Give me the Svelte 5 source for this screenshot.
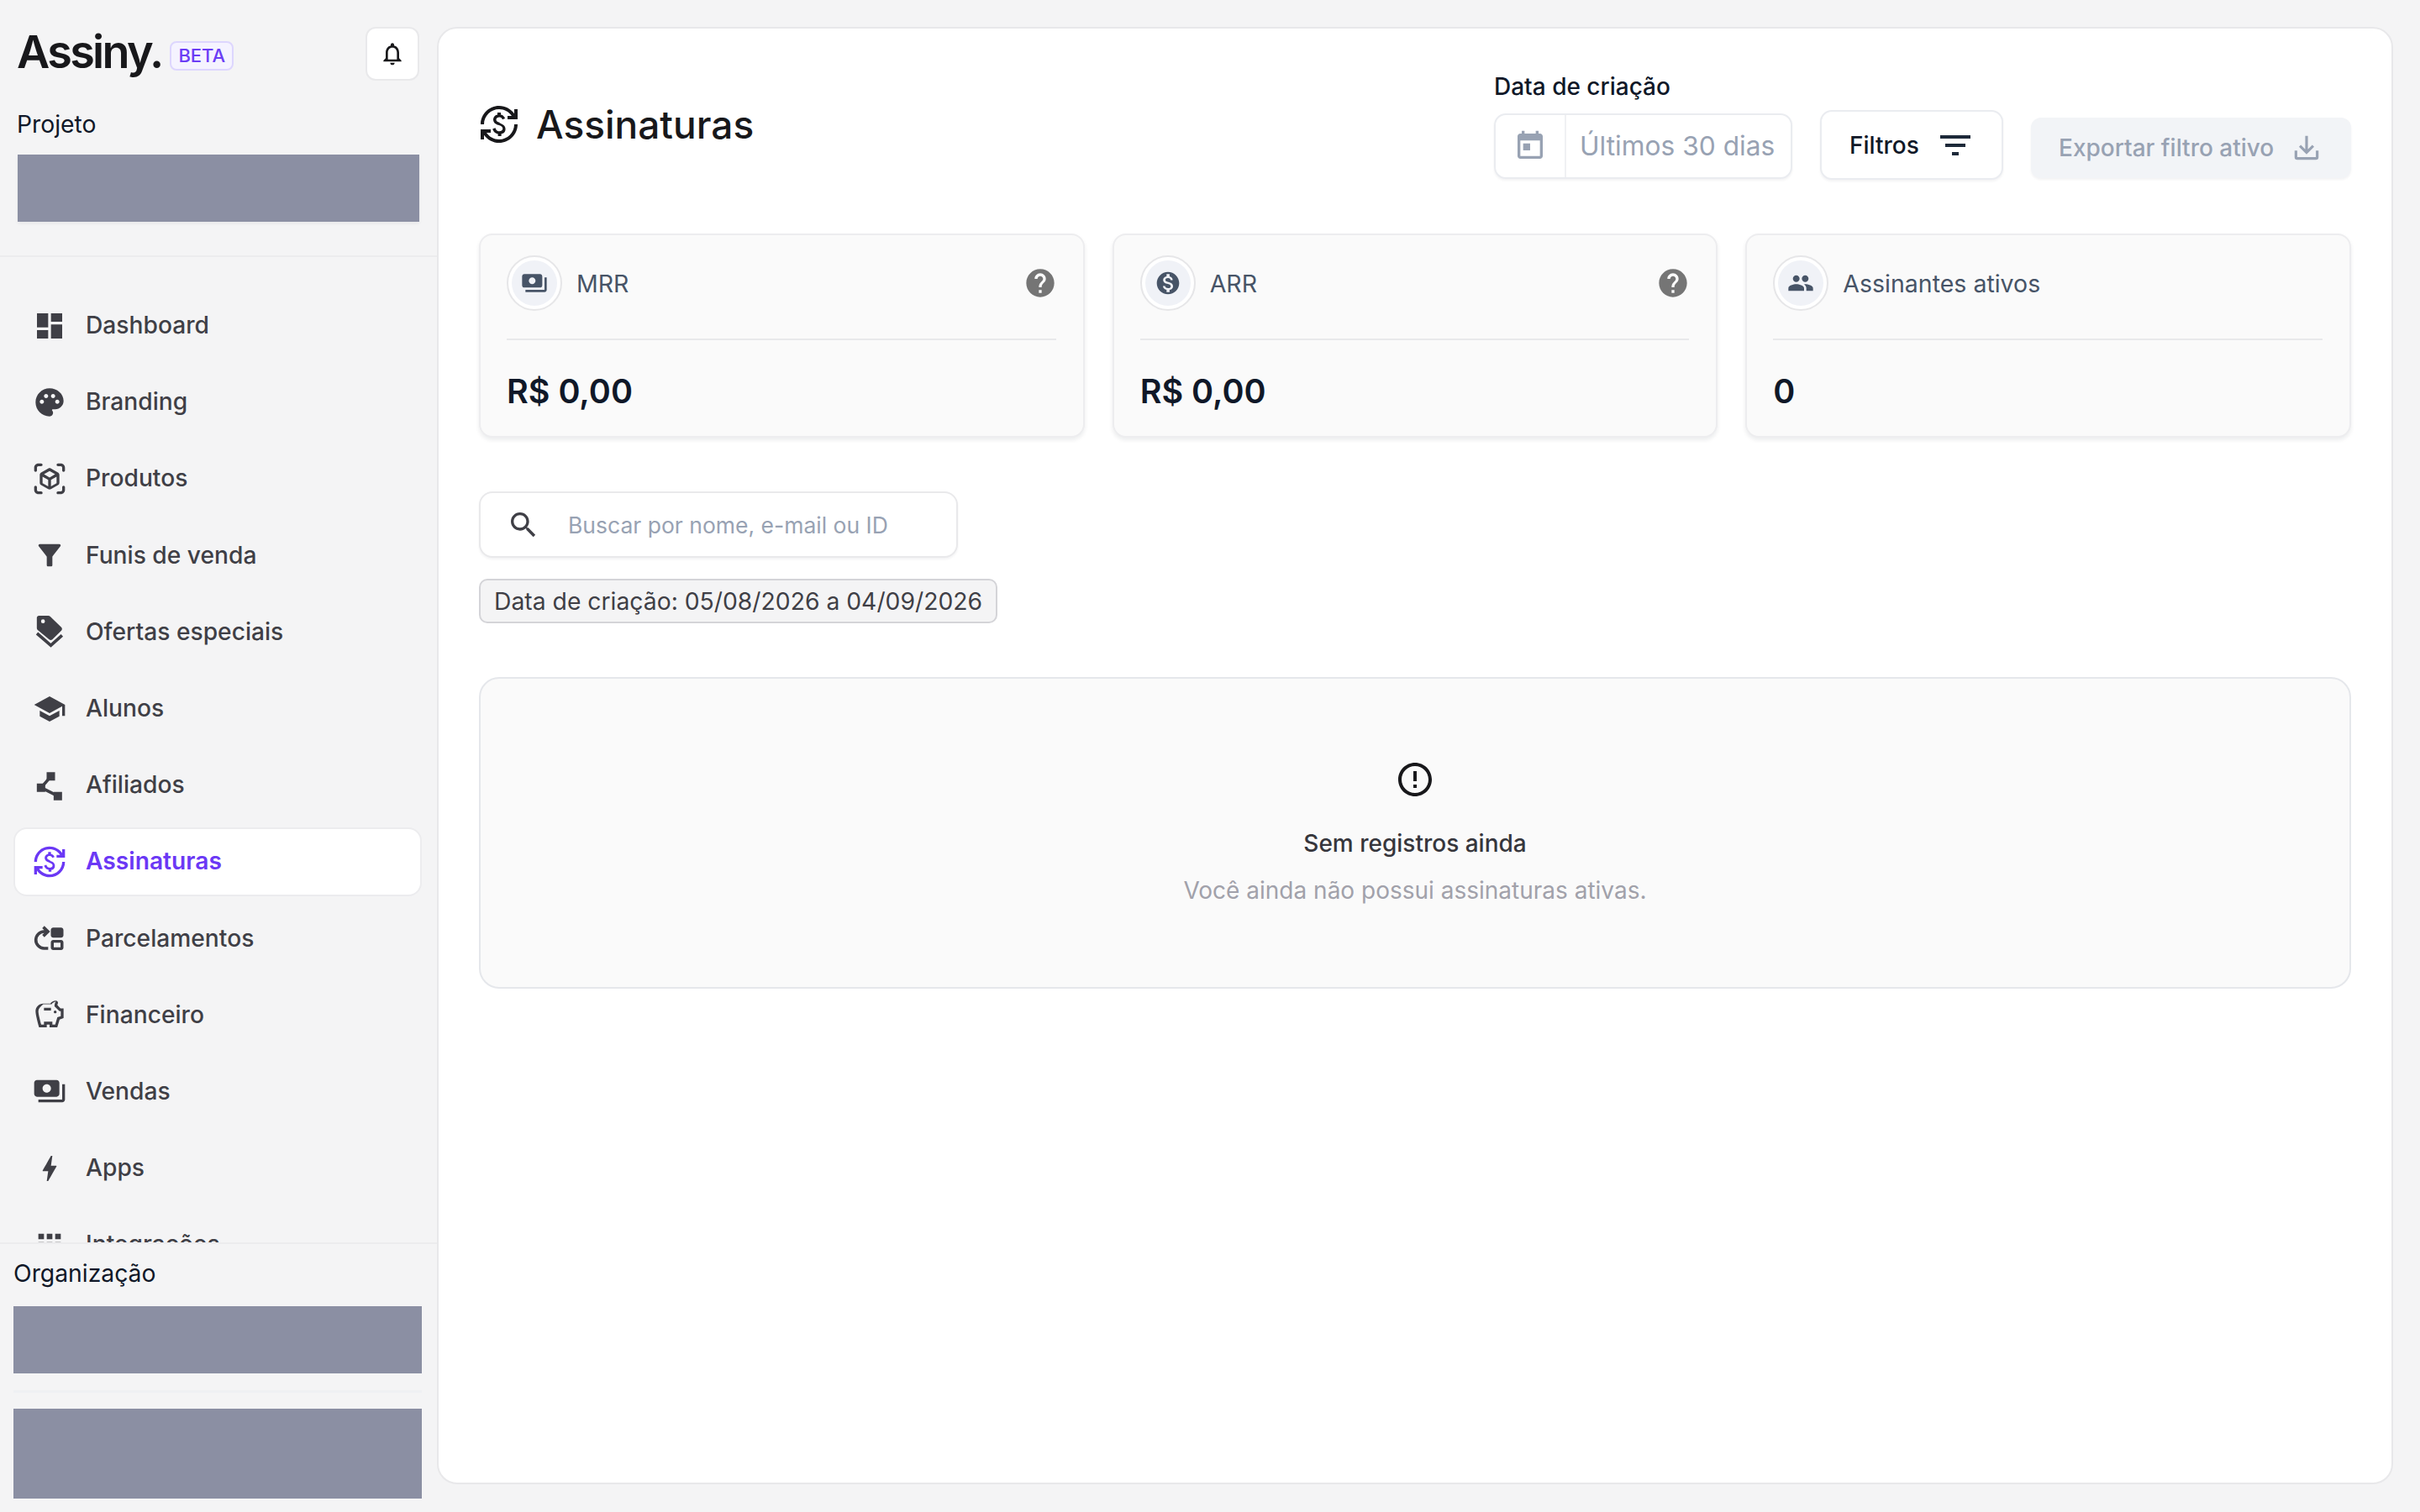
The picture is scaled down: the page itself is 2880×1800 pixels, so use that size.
<script>
  const nav = [
    { label: 'Dashboard', d: 'M3 13h8V3H3v10zm0 8h8v-6H3v6zm10 0h8V11h-8v10zm0-18v6h8V3h-8z' },
    { label: 'Branding', d: 'M12 2C6.49 2 2 6.49 2 12s4.49 10 10 10c1.38 0 2.5-1.12 2.5-2.5 0-.61-.23-1.2-.64-1.67-.08-.1-.13-.21-.13-.33 0-.28.22-.5.5-.5H16c3.31 0 6-2.69 6-6 0-4.96-4.49-9-10-9zm5.5 11c-.83 0-1.5-.67-1.5-1.5s.67-1.5 1.5-1.5 1.5.67 1.5 1.5-.67 1.5-1.5 1.5zm-3-4c-.83 0-1.5-.67-1.5-1.5S13.67 6 14.5 6s1.5.67 1.5 1.5S15.33 9 14.5 9zM5 11.5c0-.83.67-1.5 1.5-1.5S8 10.67 8 11.5 7.33 13 6.5 13 5 12.33 5 11.5zm6-4c0 .83-.67 1.5-1.5 1.5S8 8.33 8 7.5 8.67 6 9.5 6s1.5.67 1.5 1.5z' },
    { label: 'Produtos', d: 'M3 4c0-.55.45-1 1-1h2c.55 0 1-.45 1-1s-.45-1-1-1H4C2.34 1 1 2.34 1 4v2c0 .55.45 1 1 1s1-.45 1-1V4zm3 17H4c-.55 0-1-.45-1-1v-2c0-.55-.45-1-1-1s-1 .45-1 1v2c0 1.66 1.34 3 3 3h2c.55 0 1-.45 1-1s-.45-1-1-1zM20 1h-2c-.55 0-1 .45-1 1s.45 1 1 1h2c.55 0 1 .45 1 1v2c0 .55.45 1 1 1s1-.45 1-1V4c0-1.66-1.34-3-3-3zm2 16c-.55 0-1 .45-1 1v2c0 .55-.45 1-1 1h-2c-.55 0-1 .45-1 1s.45 1 1 1h2c1.66 0 3-1.34 3-3v-2c0-.55-.45-1-1-1zm-3-2.21V9.21c0-.72-.38-1.38-1-1.74l-5-2.88c-.31-.18-.65-.27-1-.27s-.69.09-1 .27L6 7.46c-.62.36-1 1.02-1 1.74v5.59c0 .72.38 1.38 1 1.74l5 2.88c.31.18.65.27 1 .27s.69-.09 1-.27l5-2.88c.62-.36 1-1.02 1-1.74zm-8 2.6-4-2.3v-4.63l4 2.33v4.6zm1-6.33L8.04 8.77 12 6.49l3.96 2.28L12 11.06zm5 4.03-4 2.3v-4.6l4-2.33v4.63z' },
    { label: 'Funis de venda', d: 'M4.25 5.61C6.27 8.2 10 13 10 13v6c0 .55.45 1 1 1h2c.55 0 1-.45 1-1v-6s3.72-4.8 5.74-7.39c.51-.66.04-1.61-.79-1.61H5.04c-.83 0-1.3.95-.79 1.61z' },
    { label: 'Ofertas especiais', d: 'M4.4.6h6.7c.5 0 1 .2 1.4.6l7.9 7.7c.7.7.7 1.7 0 2.4l-6.4 6.2c-.7.6-1.6.6-2.3 0L3.5 10.8c-.4-.4-.6-.8-.6-1.3V2.1c0-.8.7-1.5 1.5-1.5zm2.9 2.6a1.4 1.4 0 1 0 0 2.8 1.4 1.4 0 0 0 0-2.8z', line: 'M3 13.2l9.9 8.6 8-7.2' },
    { label: 'Alunos', d: 'M5 13.18v4L12 21l7-3.82v-4L12 17l-7-3.82zM12 3 1 9l11 6 9-4.91V17h2V9L12 3z' },
    { label: 'Afiliados', d: 'M9.9 2.6h6v6h-6zM2.9 10.6h6v6h-6zM14.9 16.6h6v6h-6z', line: 'M6 13.6l6.9-8M6 13.6l11.9 6' },
    { label: 'Assinaturas', active: true, d: 'M12.89 11.1c-1.78-.59-2.64-.96-2.64-1.9 0-1.02 1.11-1.39 1.81-1.39 1.31 0 1.79.99 1.9 1.34l1.58-.67c-.15-.45-.82-1.92-2.54-2.24V5h-2v1.26c-2.48.56-2.49 2.86-2.49 2.96 0 2.27 2.25 2.91 3.35 3.31 1.58.56 2.28 1.07 2.28 2.03 0 1.13-1.05 1.61-1.98 1.61-1.82 0-2.34-1.87-2.4-2.09l-1.66.67c.63 2.19 2.28 2.78 3.2 2.96V19h2v-1.24c.65-.11 2.48-.42 2.48-2.96.01-1.34-.59-2.65-3.89-3.7zM3 21H1v-6h6v2H4.52c1.61 2.41 4.36 4 7.48 4 4.97 0 9-4.03 9-9h2c0 6.08-4.92 11-11 11-3.72 0-7.01-1.85-9-4.67V21zm-2-9C1 5.92 5.92 1 12 1c3.72 0 7.01 1.85 9 4.67V3h2v6h-6V7h2.48C17.87 4.59 15.12 3 12 3c-4.97 0-9 4.03-9 9H1z' },
    { label: 'Parcelamentos', d: 'M14.6 4.4h5.6c.9 0 1.7.8 1.7 1.7v3.8c0 .9-.8 1.7-1.7 1.7h-5.6c-.9 0-1.7-.8-1.7-1.7V6.1c0-.9.8-1.7 1.7-1.7zm0 8.8h5.6c.9 0 1.7.8 1.7 1.7v3.8c0 .9-.8 1.7-1.7 1.7h-5.6c-.9 0-1.7-.8-1.7-1.7v-3.8c0-.9.8-1.7 1.7-1.7zm.4 2v3.2h4.8v-3.2z', line: 'M11 19.2H8A6 6 0 0 1 2.2 13 6 6 0 0 1 8 7.2h2M7.5 4l3.3 3.2-3.3 3.2' },
    { label: 'Financeiro', d: 'M15 10c0-.55.45-1 1-1s1 .45 1 1-.45 1-1 1-1-.45-1-1zM8 9h5V7H8v2zm14-1.5v6.97l-2.82.94L17.5 21H12v-2h-2v2H4.5S2 12.54 2 9.5 4.46 4 7.5 4h5c.91-1.21 2.36-2 4-2 .83 0 1.5.67 1.5 1.5 0 .21-.04.4-.12.58-.14.32-.26.69-.32 1.09l2.27 2.27H22zm-2 2h-.93l-3.57-3.57c.03-.97.16-2.37 1.03-3.36-1.32.19-2.45.98-3.03 1.93H7.5C5.57 6 4 7.57 4 9.5c0 1.88 1.22 6.65 2.01 9.5H8v-2h6v2h2.01l1.55-5.15 2.44-.82V9.5z' },
    { label: 'Vendas', d: 'M19 14V6c0-1.1-.9-2-2-2H3c-1.1 0-2 .9-2 2v8c0 1.1.9 2 2 2h14c1.1 0 2-.9 2-2zm-9-1c-1.66 0-3-1.34-3-3s1.34-3 3-3 3 1.34 3 3-1.34 3-3 3zm13-6v11c0 1.1-.9 2-2 2H4v-2h17V7h2z' },
    { label: 'Apps', d: 'M11 21h-1l1-7H7.5c-.58 0-.57-.32-.38-.66.19-.34.05-.08.07-.12C8.48 10.94 10.42 7.54 13 3h1l-1 7h3.5c.49 0 .56.33.47.51l-.07.15C12.96 17.55 11 21 11 21z' },
    { label: 'Integrações', d: 'M4 8h4V4H4v4zm6 12h4v-4h-4v4zm-6 0h4v-4H4v4zm0-6h4v-4H4v4zm6 0h4v-4h-4v4zm6-10v4h4V4h-4zm-6 4h4V4h-4v4zm6 6h4v-4h-4v4zm0 6h4v-4h-4v4z' }
  ];

  const subscriptionIcon = nav[7].d;
  const paymentsIcon = nav[10].d;

  const cards = [
    { label: 'MRR', value: 'R$ 0,00', help: true, d: paymentsIcon },
    { label: 'ARR', value: 'R$ 0,00', help: true, d: 'M12 2C6.48 2 2 6.48 2 12s4.48 10 10 10 10-4.48 10-10S17.52 2 12 2zm1.41 16.09V20h-2.67v-1.93c-1.71-.36-3.16-1.46-3.27-3.4h1.96c.1 1.05.82 1.87 2.65 1.87 1.96 0 2.4-.98 2.4-1.59 0-.83-.44-1.61-2.67-2.14-2.48-.6-4.18-1.62-4.18-3.67 0-1.72 1.39-2.84 3.11-3.21V4h2.67v1.95c1.86.45 2.79 1.86 2.85 3.39H14.3c-.05-1.11-.64-1.87-2.22-1.87-1.5 0-2.4.68-2.4 1.64 0 .84.65 1.39 2.67 1.91s4.18 1.39 4.18 3.91c-.01 1.83-1.38 2.83-3.12 3.16z' },
    { label: 'Assinantes ativos', value: '0', help: false, d: 'M16 11c1.66 0 2.99-1.34 2.99-3S17.66 5 16 5c-1.66 0-3 1.34-3 3s1.34 3 3 3zm-8 0c1.66 0 2.99-1.34 2.99-3S9.66 5 8 5C6.34 5 5 6.34 5 8s1.34 3 3 3zm0 2c-2.33 0-7 1.17-7 3.5V19h14v-2.5c0-2.33-4.67-3.5-7-3.5zm8 0c-.29 0-.62.02-.97.05 1.16.84 1.97 1.97 1.97 3.45V19h6v-2.5c0-2.33-4.67-3.5-7-3.5z' }
  ];
</script>

<div class="layout">
  <aside class="sidebar">
    <div class="sidebar-top">
      <div class="brand-row">
        <div class="brand">
          <span class="logo">Assiny.</span>
          <span class="beta">BETA</span>
        </div>
        <button class="bell" aria-label="Notificações">
          <svg viewBox="0 0 24 24" width="32" height="32"><path fill="#18181b" d="M12 22c1.1 0 2-.9 2-2h-4c0 1.1.9 2 2 2zm6-6v-5c0-3.07-1.63-5.64-4.5-6.32V4c0-.83-.67-1.5-1.5-1.5s-1.5.67-1.5 1.5v.68C7.64 5.36 6 7.92 6 11v5l-2 2v1h16v-1l-2-2zm-2 1H8v-6c0-2.48 1.51-4.5 4-4.5s4 2.02 4 4.5v6z" /></svg>
        </button>
      </div>
      <div class="side-label">Projeto</div>
      <div class="redacted project"></div>
    </div>

    <nav class="nav">
      {#each nav as item}
        <a class="nav-item" class:active={item.active} href="#top">
          <svg viewBox="0 0 24 24" width="40" height="40">
            <path fill="currentColor" fill-rule="evenodd" d={item.d} />
            {#if item.line}
              <path d={item.line} fill="none" stroke="currentColor" stroke-width="2.2" />
            {/if}
          </svg>
          <span>{item.label}</span>
        </a>
      {/each}
    </nav>

    <div class="sidebar-bottom">
      <div class="side-label">Organização</div>
      <div class="redacted org"></div>
      <div class="side-rule"></div>
      <div class="redacted user"></div>
    </div>
  </aside>

  <main class="panel">
    <header class="header">
      <h1 class="title">
        <svg viewBox="0 0 24 24" width="48" height="48"><path fill="#18181b" d={subscriptionIcon} /></svg>
        Assinaturas
      </h1>
      <div class="controls">
        <div class="date-group">
          <span class="date-label">Data de criação</span>
          <div class="date-input">
            <span class="date-icon">
              <svg viewBox="0 0 24 24" width="40" height="40"><path fill="#98a2b3" d="M19 3h-1V1h-2v2H8V1H6v2H5c-1.11 0-1.99.9-1.99 2L3 19c0 1.1.89 2 2 2h14c1.1 0 2-.9 2-2V5c0-1.1-.9-2-2-2zm0 16H5V8h14v11zM7 10h5v5H7z" /></svg>
            </span>
            <span class="date-value">Últimos 30 dias</span>
          </div>
        </div>
        <button class="filters">
          Filtros
          <svg viewBox="0 0 24 24" width="48" height="48"><path fill="#1d2939" d="M10 18h4v-2h-4v2zM3 6v2h18V6H3zm3 7h12v-2H6v2z" /></svg>
        </button>
        <button class="export" disabled>
          Exportar filtro ativo
          <svg viewBox="0 0 24 24" width="38" height="38" fill="none" stroke="#98a2b3" stroke-width="2"><path d="M4 14v5a1 1 0 0 0 1 1h14a1 1 0 0 0 1-1v-5M12 3v12.5M7 10.5l5 5 5-5" /></svg>
        </button>
      </div>
    </header>

    <section class="cards">
      {#each cards as card}
        <div class="card">
          <div class="card-head">
            <span class="ring">
              <span class="ring-inner">
                <svg viewBox="0 0 24 24" width="32" height="32"><path fill="#475467" d={card.d} /></svg>
              </span>
            </span>
            <span class="card-label">{card.label}</span>
            {#if card.help}
              <svg class="help" viewBox="0 0 24 24" width="40" height="40"><path fill="#757575" d="M12 2C6.48 2 2 6.48 2 12s4.48 10 10 10 10-4.48 10-10S17.52 2 12 2zm1 17h-2v-2h2v2zm2.07-7.75-.9.92C13.45 12.9 13 13.5 13 15h-2v-.5c0-1.1.45-2.1 1.17-2.83l1.24-1.26c.37-.36.59-.86.59-1.41 0-1.1-.9-2-2-2s-2 .9-2 2H8c0-2.21 1.79-4 4-4s4 1.79 4 4c0 .88-.36 1.68-.93 2.25z" /></svg>
            {/if}
          </div>
          <div class="card-value">{card.value}</div>
        </div>
      {/each}
    </section>

    <div class="search">
      <svg viewBox="0 0 24 24" width="40" height="40"><path fill="#3f3f46" d="M15.5 14h-.79l-.28-.27C15.41 12.59 16 11.11 16 9.5 16 5.91 13.09 3 9.5 3S3 5.91 3 9.5 5.91 16 9.5 16c1.61 0 3.09-.59 4.23-1.57l.27.28v.79l5 4.99L20.49 19l-4.99-5zm-6 0C7.01 14 5 11.99 5 9.5S7.01 5 9.5 5 14 7.01 14 9.5 11.99 14 9.5 14z" /></svg>
      <span>Buscar por nome, e-mail ou ID</span>
    </div>

    <div class="chip">Data de criação: 05/08/2026 a 04/09/2026</div>

    <section class="empty">
      <svg viewBox="0 0 24 24" width="48" height="48"><path fill="#18181b" d="M11 15h2v2h-2zm0-8h2v6h-2zm.99-5C6.47 2 2 6.48 2 12s4.47 10 9.99 10C17.52 22 22 17.52 22 12S17.52 2 11.99 2zM12 20c-4.42 0-8-3.58-8-8s3.58-8 8-8 8 3.58 8 8-3.58 8-8 8z" /></svg>
      <h2>Sem registros ainda</h2>
      <p>Você ainda não possui assinaturas ativas.</p>
    </section>
  </main>
</div>

<style>
  :global(body) {
    margin: 0;
    background: #f4f4f5;
    font-family: Inter, "Liberation Sans", sans-serif;
  }

  .layout {
    display: flex;
    height: 1800px;
    overflow: hidden;
  }

  .sidebar {
    width: 520px;
    flex: none;
    display: flex;
    flex-direction: column;
    height: 100%;
  }

  .sidebar-top {
    padding: 32px 21px 40px;
    border-bottom: 2px solid #ececee;
  }

  .brand-row {
    display: flex;
    align-items: center;
    justify-content: space-between;
    height: 64px;
  }

  .brand {
    display: flex;
    align-items: center;
    gap: 10px;
    margin-left: -1px;
  }

  .logo {
    font-size: 54px;
    font-weight: 600;
    letter-spacing: -0.05em;
    color: #18181b;
    line-height: 64px;
    margin-top: -4px;
  }

  .beta {
    font-size: 22px;
    font-weight: 500;
    line-height: 31px;
    padding: 0 8px;
    color: #6b3df5;
    background: #f5f3ff;
    border: 2px solid #ddd6fe;
    border-radius: 8px;
    margin-top: 4px;
  }

  .bell {
    width: 64px;
    height: 64px;
    padding: 0;
    display: flex;
    align-items: center;
    justify-content: center;
    background: #fff;
    border: 2px solid #e9e9eb;
    border-radius: 12px;
  }

  .side-label {
    font-size: 28.3px;
    line-height: 34px;
    color: #101828;
  }

  .sidebar-top .side-label {
    margin: 35px 0 19px -1px;
  }

  .redacted {
    background: #8b8fa3;
  }

  .project {
    height: 80px;
    box-shadow: 0 2px 4px rgba(16, 24, 40, 0.06);
  }

  .nav {
    flex: 1;
    min-height: 0;
    overflow: hidden;
    padding: 41px 18px 0 16px;
    display: flex;
    flex-direction: column;
    gap: 10px;
  }

  .nav-item {
    flex: none;
    height: 81.2px;
    box-sizing: border-box;
    display: flex;
    align-items: center;
    gap: 23px;
    padding-left: 21px;
    font-size: 28.2px;
    font-weight: 500;
    color: #3f3f46;
    text-decoration: none;
    border: 2px solid transparent;
    border-radius: 16px;
  }

  .nav-item span {
    margin-top: -1px;
  }

  .nav-item.active {
    background: #fff;
    border-color: #ececee;
    color: #6b38f5;
    font-weight: 600;
  }

  .sidebar-bottom {
    flex: none;
    height: 321px;
    box-sizing: border-box;
    padding: 18px 18px 0 16px;
    border-top: 2px solid #ececee;
    background: #f4f4f5;
  }

  .sidebar-bottom .side-label {
    margin-bottom: 22px;
  }

  .org {
    height: 80px;
  }

  .side-rule {
    height: 3px;
    margin: 20px 0 19px;
    background: #eff0f3;
  }

  .user {
    height: 107px;
  }

  .panel {
    flex: 1;
    min-width: 0;
    box-sizing: border-box;
    margin: 32px 32px 33px 0;
    padding: 1px 48px 0;
    background: #fff;
    border: 2px solid #e8e8ea;
    border-radius: 24px;
  }

  .header {
    display: flex;
    justify-content: space-between;
    align-items: flex-start;
    padding-top: 51px;
  }

  .title {
    display: flex;
    align-items: center;
    gap: 20px;
    margin: 33px 0 0;
    font-size: 46px;
    font-weight: 500;
    line-height: 58px;
    color: #18181b;
  }

  .controls {
    display: flex;
    align-items: flex-end;
    gap: 33px;
  }

  .date-group {
    display: flex;
    flex-direction: column;
    gap: 15px;
  }

  .date-label {
    font-size: 28px;
    line-height: 34px;
    font-weight: 500;
    color: #101828;
  }

  .date-input {
    display: flex;
    align-items: center;
    width: 355px;
    height: 78px;
    box-sizing: border-box;
    background: #fff;
    border: 2px solid #eaecf0;
    border-radius: 14px;
    box-shadow: 0 2px 3px rgba(16, 24, 40, 0.05);
  }

  .date-icon {
    width: 82px;
    height: 100%;
    flex: none;
    display: flex;
    align-items: center;
    justify-content: center;
    border-right: 2px solid #f0f1f3;
  }

  .date-value {
    padding: 0 0 2px 16px;
    font-size: 31.7px;
    color: #98a2b3;
  }

  .filters {
    width: 218px;
    height: 83px;
    margin-bottom: -1px;
    display: flex;
    align-items: center;
    gap: 19px;
    padding: 0 0 0 33px;
    box-sizing: border-box;
    font: 500 28px Inter, sans-serif;
    color: #101828;
    background: #fff;
    border: 2px solid #eaecf0;
    border-radius: 14px;
    box-shadow: 0 2px 3px rgba(16, 24, 40, 0.05);
  }

  .export {
    width: 381px;
    height: 72px;
    margin-bottom: 1px;
    display: flex;
    align-items: center;
    gap: 20px;
    padding: 0 0 0 33px;
    box-sizing: border-box;
    font: 500 28px Inter, sans-serif;
    color: #98a2b3;
    background: #f2f4f7;
    border: none;
    border-radius: 12px;
    box-shadow: 0 2px 3px rgba(16, 24, 40, 0.05);
  }

  .cards {
    display: grid;
    grid-template-columns: repeat(3, 1fr);
    gap: 33px;
    margin-top: 65px;
  }

  .card {
    height: 243px;
    box-sizing: border-box;
    padding: 24px 32px 0 31px;
    background: #fafafa;
    border: 2px solid #ededef;
    border-radius: 16px;
    box-shadow: 0 3px 5px rgba(16, 24, 40, 0.08);
  }

  .card-head {
    display: flex;
    align-items: center;
    gap: 17px;
    padding-bottom: 33px;
    border-bottom: 2px solid #e8e9eb;
  }

  .ring {
    width: 66px;
    height: 66px;
    box-sizing: border-box;
    flex: none;
    display: flex;
    align-items: center;
    justify-content: center;
    background: #fff;
    border: 2px solid #e6e6e8;
    border-radius: 50%;
  }

  .ring-inner {
    width: 54px;
    height: 54px;
    display: flex;
    align-items: center;
    justify-content: center;
    background: #f0f2f7;
    border-radius: 50%;
  }

  .card-label {
    font-size: 28.5px;
    color: #475467;
  }

  .help {
    margin-left: auto;
    margin-right: -1px;
  }

  .card-value {
    margin-top: 37px;
    font-size: 39.5px;
    font-weight: 600;
    line-height: 48px;
    color: #101828;
  }

  .search {
    width: 570px;
    height: 79px;
    box-sizing: border-box;
    margin-top: 64px;
    display: flex;
    align-items: center;
    gap: 33px;
    padding-left: 31px;
    font-size: 26.5px;
    color: #98a2b3;
    background: #fff;
    border: 2px solid #e9e9eb;
    border-radius: 16px;
    box-shadow: 0 2px 3px rgba(16, 24, 40, 0.05);
  }

  .chip {
    width: fit-content;
    height: 53px;
    box-sizing: border-box;
    margin-top: 25px;
    padding: 0 16px;
    display: flex;
    align-items: center;
    font-size: 28.3px;
    color: #3f3f46;
    background: #f4f4f5;
    border: 2px solid #d4d4d8;
    border-radius: 10px;
  }

  .empty {
    height: 371px;
    box-sizing: border-box;
    margin-top: 64px;
    padding-top: 96px;
    display: flex;
    flex-direction: column;
    align-items: center;
    background: #fafafa;
    border: 2px solid #e5e7eb;
    border-radius: 24px;
  }

  .empty h2 {
    margin: 35px 0 0;
    font-size: 28px;
    font-weight: 500;
    line-height: 34px;
    color: #36363c;
  }

  .empty p {
    margin: 22px 0 0;
    font-size: 28px;
    line-height: 34px;
    color: #a1a1aa;
  }
</style>
